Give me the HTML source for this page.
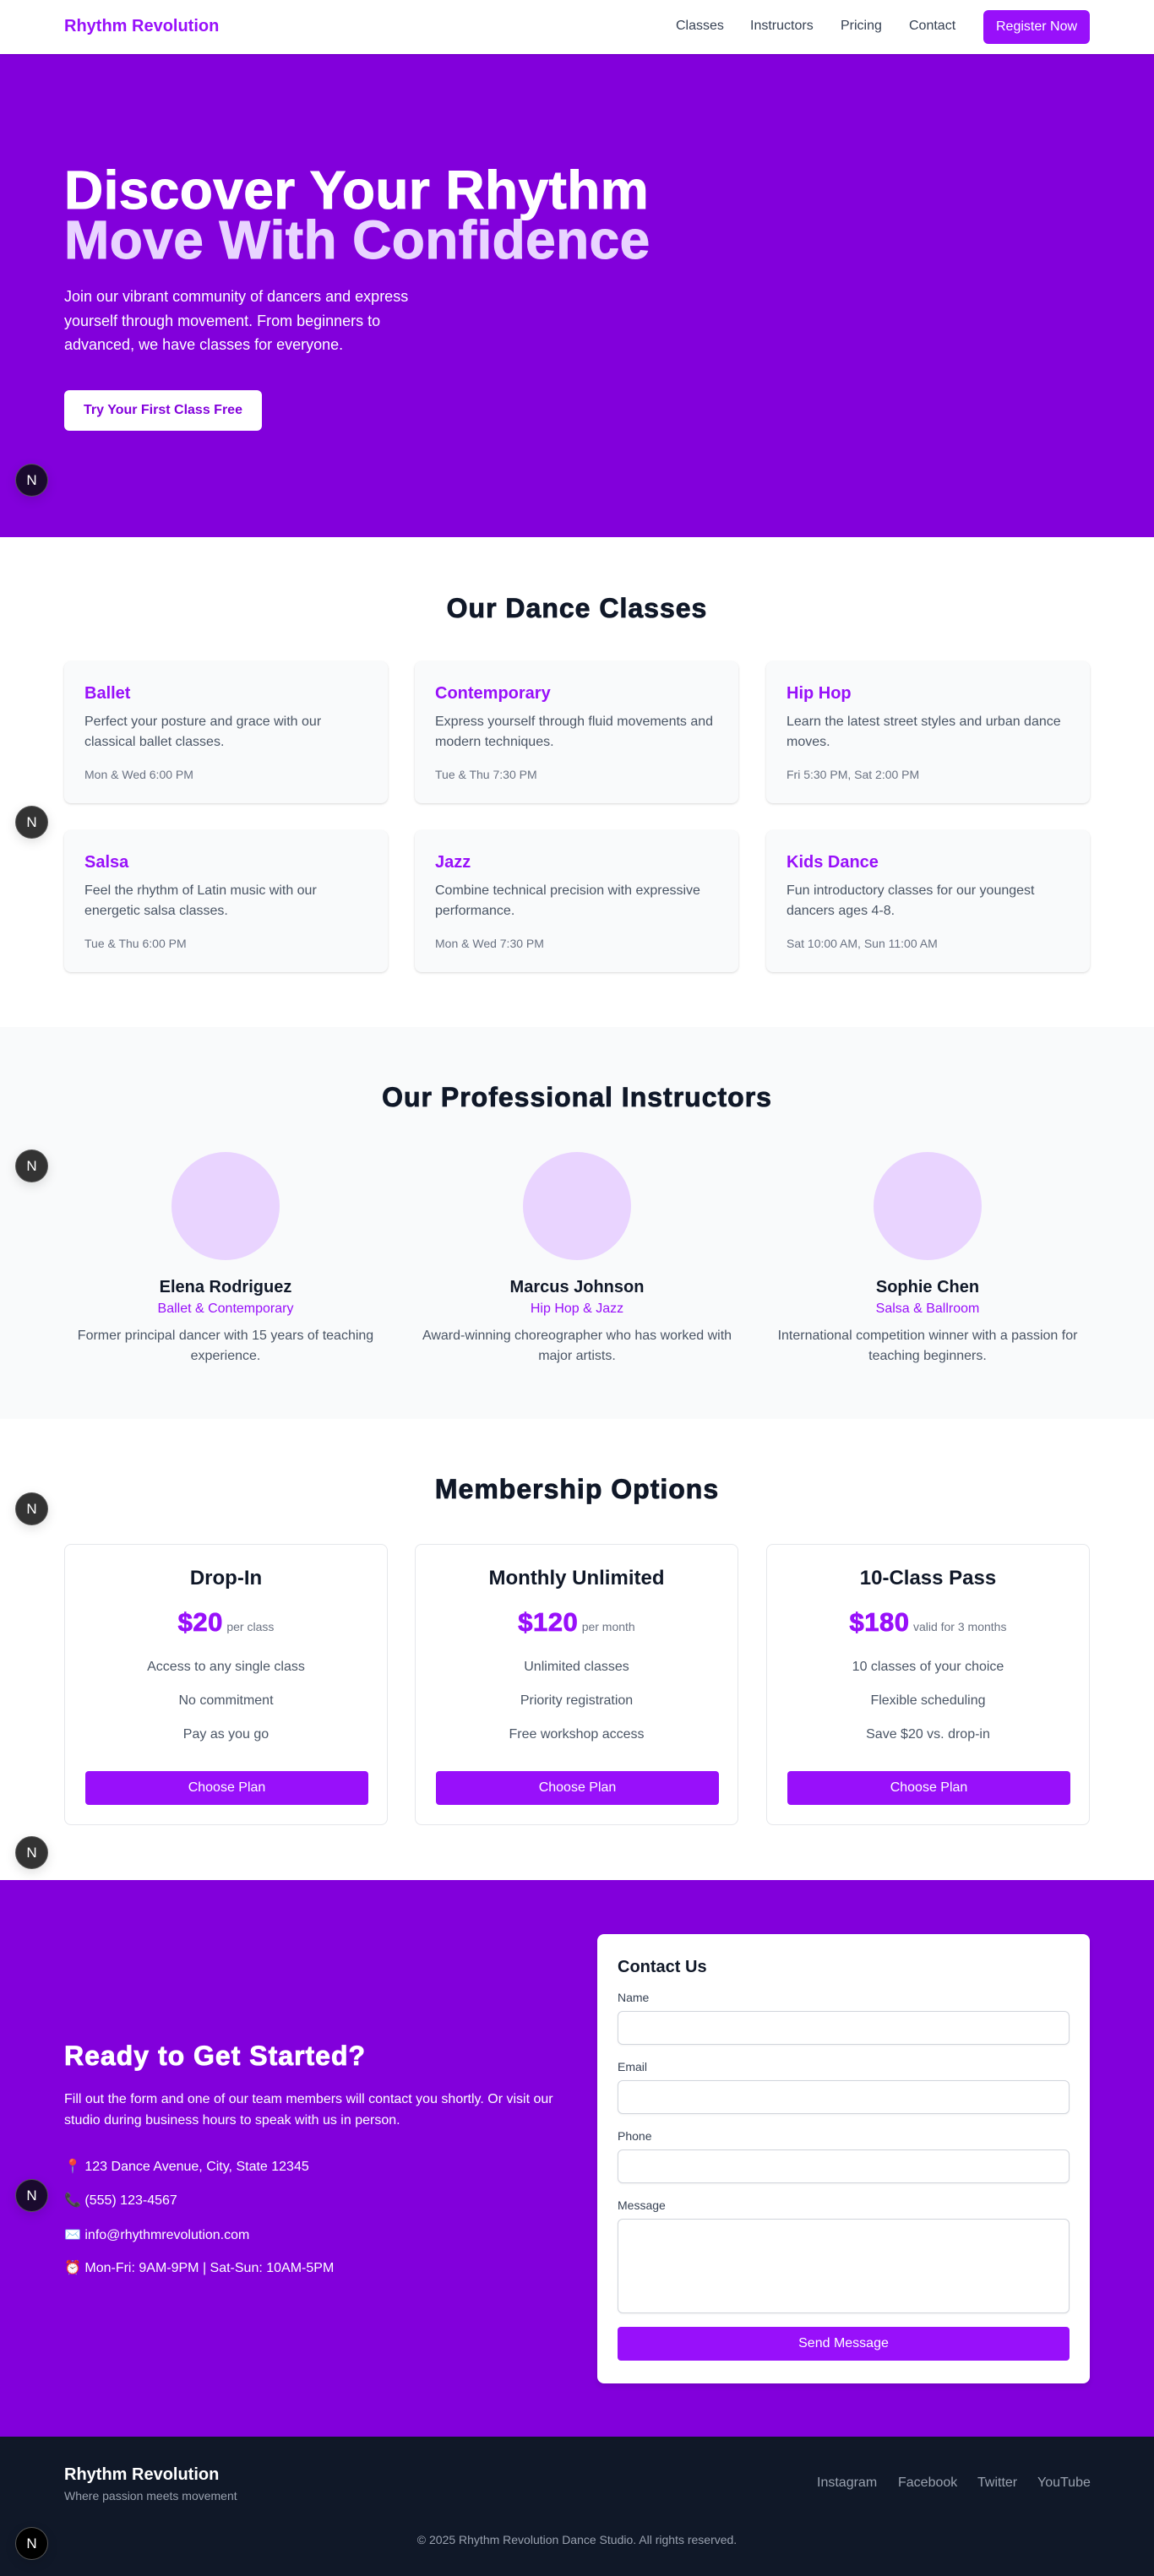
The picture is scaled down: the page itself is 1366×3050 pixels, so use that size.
<!DOCTYPE html>
<html><head><meta charset="utf-8"><style>
*{box-sizing:border-box;margin:0;padding:0}
body{width:1366px;height:3050px;position:relative;font-family:"Liberation Sans",Arial,sans-serif;background:#fff;overflow:hidden}
.a{position:absolute}
.nav{top:0;left:0;width:1366px;height:64px;background:#fff;box-shadow:0 1px 3px rgba(0,0,0,.1);z-index:2}
.logo{left:76px;top:20px;font-size:20px;font-weight:bold;color:#9810fa}
.nl{top:22px;font-size:16px;color:#364153}
.reg{left:1164px;top:12px;width:126px;height:40px;background:#9810fa;color:#fff;border-radius:6px;font-size:16px;line-height:40px;text-align:center}
.hero{top:64px;left:0;width:1366px;height:572px;background:#8200db}
h1{position:absolute;left:76px;top:132px;font-size:64px;line-height:59px;font-weight:bold;color:#fff;letter-spacing:0.4px;white-space:nowrap;-webkit-text-stroke:1px currentColor}
h1 span{color:#e9d4ff}
.hp{left:76px;top:273px;width:460px;font-size:18px;line-height:28.5px;color:#fff}
.tb{left:76px;top:398px;width:234px;height:48px;background:#fff;border-radius:6px;color:#8200db;font-weight:bold;font-size:16px;line-height:48px;text-align:center}
.h2{left:0;width:1366px;text-align:center;font-size:32px;font-weight:bold;color:#101828;letter-spacing:1px;-webkit-text-stroke:0.8px currentColor}
.card{background:#f9fafb;border-radius:8px;box-shadow:0 1px 3px rgba(0,0,0,.1),0 1px 2px rgba(0,0,0,.06);width:383px;height:168px;padding:24px}
.card h3{font-size:20px;font-weight:600;color:#9810fa;line-height:28px}
.card p{font-size:16px;line-height:24px;color:#4a5565;margin-top:8px}
.card .s{font-size:14px;color:#6a7282;margin-top:16px;line-height:20px}
.ins{top:1216px;left:0;width:1366px;height:464px;background:#f9fafb}
.iv{width:400px;text-align:center}
.av{width:128px;height:128px;border-radius:50%;background:#e9d4ff;margin:0 auto}
.iv h4{font-size:20px;font-weight:600;color:#101828;margin-top:18px;line-height:28px}
.iv .sp{font-size:16px;color:#9810fa;line-height:24px}
.iv .b{font-size:16px;color:#4a5565;line-height:24px;margin-top:8px}
.pc{width:383px;height:333px;border:1px solid #e5e7eb;border-radius:8px;background:#fff;text-align:center;padding:24px}
.pc h3{font-size:24px;font-weight:600;color:#101828;line-height:32px}
.pr{margin-top:18px;height:36px;line-height:36px}
.pr b{font-size:31px;color:#9810fa;letter-spacing:.5px;-webkit-text-stroke:.8px currentColor}
.pr small{font-size:14px;color:#6a7282}
.pc .f{font-size:16px;color:#4a5565;line-height:24px;margin-top:16px}
.pc .f1{margin-top:23px}
.cb{position:absolute;left:24px;top:268px;width:335px;height:40px;background:#9810fa;color:#fff;border-radius:4px;font-size:16px;line-height:40px}
.ct{top:2226px;left:0;width:1366px;height:659px;background:#8200db}
.form{left:707px;top:2290px;width:583px;height:532px;background:#fff;border-radius:8px;padding:24px;box-shadow:0 4px 6px rgba(0,0,0,.1)}
.form h3{font-size:20px;font-weight:600;color:#101828;line-height:28px;margin-top:1px}
.form label{display:block;font-size:14px;color:#364153;line-height:20px;margin-top:16px}
.form label.l1{margin-top:12px}
.in{height:40px;border:1px solid #d1d5dc;border-radius:6px;margin-top:6px;box-shadow:0 1px 2px rgba(0,0,0,.05)}
.sb{margin-top:16px;height:40px;background:#9810fa;color:#fff;border-radius:4px;font-size:16px;line-height:40px;text-align:center}
.ci{left:76px;font-size:16px;color:#fff;line-height:24px}
.ft{top:2885px;left:0;width:1366px;height:165px;background:#101828}
.fl{top:2931px;font-size:16px;color:#99a1af}
.nx{width:37px;height:37px;border-radius:50%;background:#333;left:19px;color:#fff;font-size:17px;line-height:37px;text-align:center;box-shadow:0 0 0 1px #555,0 4px 14px rgba(0,0,0,.15);z-index:5}
.nx.d{background:#1a0a2e}
</style></head><body>
<div class="a nav">
<div class="a logo">Rhythm Revolution</div>
<div class="a nl" style="left:800px">Classes</div>
<div class="a nl" style="left:888px">Instructors</div>
<div class="a nl" style="left:995px">Pricing</div>
<div class="a nl" style="left:1076px">Contact</div>
<div class="a reg">Register Now</div>
</div>
<div class="a hero">
<h1>Discover Your Rhythm<br><span>Move With Confidence</span></h1>
<div class="a hp">Join our vibrant community of dancers and express yourself through movement. From beginners to advanced, we have classes for everyone.</div>
<div class="a tb">Try Your First Class Free</div>
</div>

<div class="a h2" style="top:702px">Our Dance Classes</div>
<div class="a card" style="left:76px;top:783px"><h3>Ballet</h3><p>Perfect your posture and grace with our classical ballet classes.</p><div class="s">Mon &amp; Wed 6:00 PM</div></div>
<div class="a card" style="left:491px;top:783px"><h3>Contemporary</h3><p>Express yourself through fluid movements and modern techniques.</p><div class="s">Tue &amp; Thu 7:30 PM</div></div>
<div class="a card" style="left:907px;top:783px"><h3>Hip Hop</h3><p>Learn the latest street styles and urban dance moves.</p><div class="s">Fri 5:30 PM, Sat 2:00 PM</div></div>
<div class="a card" style="left:76px;top:983px"><h3>Salsa</h3><p>Feel the rhythm of Latin music with our energetic salsa classes.</p><div class="s">Tue &amp; Thu 6:00 PM</div></div>
<div class="a card" style="left:491px;top:983px"><h3>Jazz</h3><p>Combine technical precision with expressive performance.</p><div class="s">Mon &amp; Wed 7:30 PM</div></div>
<div class="a card" style="left:907px;top:983px"><h3>Kids Dance</h3><p>Fun introductory classes for our youngest dancers ages 4-8.</p><div class="s">Sat 10:00 AM, Sun 11:00 AM</div></div>

<div class="a ins"></div>
<div class="a h2" style="top:1281px">Our Professional Instructors</div>
<div class="a iv" style="left:67px;top:1364px"><div class="av"></div><h4>Elena Rodriguez</h4><div class="sp">Ballet &amp; Contemporary</div><div class="b">Former principal dancer with 15 years of teaching experience.</div></div>
<div class="a iv" style="left:483px;top:1364px"><div class="av"></div><h4>Marcus Johnson</h4><div class="sp">Hip Hop &amp; Jazz</div><div class="b">Award-winning choreographer who has worked with major artists.</div></div>
<div class="a iv" style="left:898px;top:1364px"><div class="av"></div><h4>Sophie Chen</h4><div class="sp">Salsa &amp; Ballroom</div><div class="b">International competition winner with a passion for teaching beginners.</div></div>

<div class="a h2" style="top:1745px">Membership Options</div>
<div class="a pc" style="left:76px;top:1828px"><h3>Drop-In</h3><div class="pr"><b>$20</b> <small>per class</small></div><div class="f f1">Access to any single class</div><div class="f">No commitment</div><div class="f">Pay as you go</div><div class="cb">Choose Plan</div></div>
<div class="a pc" style="left:491px;top:1828px"><h3>Monthly Unlimited</h3><div class="pr"><b>$120</b> <small>per month</small></div><div class="f f1">Unlimited classes</div><div class="f">Priority registration</div><div class="f">Free workshop access</div><div class="cb">Choose Plan</div></div>
<div class="a pc" style="left:907px;top:1828px"><h3>10-Class Pass</h3><div class="pr"><b>$180</b> <small>valid for 3 months</small></div><div class="f f1">10 classes of your choice</div><div class="f">Flexible scheduling</div><div class="f">Save $20 vs. drop-in</div><div class="cb">Choose Plan</div></div>

<div class="a ct"></div>
<div class="a" style="left:76px;top:2416px;font-size:32px;font-weight:bold;color:#fff;line-height:36px;letter-spacing:1px;-webkit-text-stroke:.8px #fff">Ready to Get Started?</div>
<div class="a" style="left:76px;top:2473px;width:590px;font-size:16px;line-height:25px;color:#fff">Fill out the form and one of our team members will contact you shortly. Or visit our studio during business hours to speak with us in person.</div>
<div class="a ci" style="top:2554px">📍 123 Dance Avenue, City, State 12345</div>
<div class="a ci" style="top:2594px">📞 (555) 123-4567</div>
<div class="a ci" style="top:2635px">✉️ info@rhythmrevolution.com</div>
<div class="a ci" style="top:2674px">⏰ Mon-Fri: 9AM-9PM | Sat-Sun: 10AM-5PM</div>
<div class="a form"><h3>Contact Us</h3>
<label class="l1">Name</label><div class="in"></div>
<label>Email</label><div class="in"></div>
<label>Phone</label><div class="in"></div>
<label>Message</label><div class="in" style="height:112px"></div>
<div class="sb">Send Message</div></div>

<div class="a ft"></div>
<div class="a" style="left:76px;top:2919px;font-size:20px;font-weight:bold;color:#fff">Rhythm Revolution</div>
<div class="a" style="left:76px;top:2947px;font-size:14px;color:#99a1af">Where passion meets movement</div>
<div class="a fl" style="left:967px">Instagram</div>
<div class="a fl" style="left:1063px">Facebook</div>
<div class="a fl" style="left:1157px">Twitter</div>
<div class="a fl" style="left:1228px">YouTube</div>
<div class="a" style="left:0;width:1366px;text-align:center;top:2999px;font-size:14px;color:#99a1af">© 2025 Rhythm Revolution Dance Studio. All rights reserved.</div>

<div class="a nx d" style="top:550px">N</div>
<div class="a nx" style="top:955px">N</div>
<div class="a nx" style="top:1362px">N</div>
<div class="a nx" style="top:1768px">N</div>
<div class="a nx" style="top:2175px">N</div>
<div class="a nx d" style="top:2581px">N</div>
<div class="a nx d" style="top:2993px;background:#000">N</div>
</body></html>
